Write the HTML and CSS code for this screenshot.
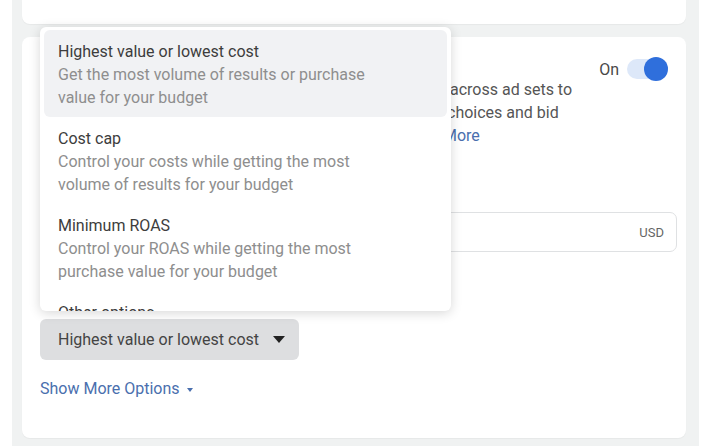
FILE: index.html
```html
<!DOCTYPE html>
<html lang="en">
<head>
    <meta charset="UTF-8">
    <meta name="viewport" content="width=device-width, initial-scale=1.0">
    <title>Bid Strategy</title>
    <link rel="stylesheet" href="styles.css">
</head>
<body>
    <div class="panel">
        <div class="card card-top"></div>

        <div class="card card-main">
            <div class="header-row">
                <span class="card-title">Campaign Budget Optimization</span>
                <span class="switch-label">On</span>
                <span class="switch"><span class="knob"></span></span>
            </div>

            <div class="desc">
                <div class="desc-line"><span class="lead">Distribute your campaign budget</span><span class="rest">across ad sets to</span></div>
                <div class="desc-line"><span class="lead">get more results based on your delivery</span><span class="rest shift-1">choices and bid</span></div>
                <div class="desc-line"><span class="lead">strategy in real time. Learn</span><span class="rest link shift-2">More</span></div>
            </div>

            <div class="field-label">Campaign Budget</div>
            <div class="input-box">
                <span class="input-value">$20.00</span>
                <span class="currency">USD</span>
            </div>

            <div class="field-label bid-label">Campaign Bid Strategy</div>
            <button class="select-btn">Highest value or lowest cost <span class="caret"></span></button>

            <div class="more-link">Show More Options <span class="caret-small"></span></div>

            <!-- open dropdown, drawn over the card -->
            <div class="menu">
                <div class="menu-item active">
                    <div class="item-title">Highest value or lowest cost</div>
                    <div class="item-desc">Get the most volume of results or purchase value for your budget</div>
                </div>
                <div class="menu-item">
                    <div class="item-title">Cost cap</div>
                    <div class="item-desc">Control your costs while getting the most volume of results for your budget</div>
                </div>
                <div class="menu-item">
                    <div class="item-title">Minimum ROAS</div>
                    <div class="item-desc">Control your ROAS while getting the most purchase value for your budget</div>
                </div>
                <div class="menu-item">
                    <div class="item-title">Other options</div>
                    <div class="item-desc">Bid cap and target cost</div>
                </div>
            </div>
        </div>
    </div>
</body>
</html>
```

FILE: styles.css
```css
body {
    margin: 0;
    background-color: #fff;
    font-family: Roboto, 'Liberation Sans', sans-serif;
    color: #444;
}
.panel {
    margin-left: 12px;
    width: 687px;
    height: 446px;
    background-color: #f0f2f2; /* page grey */
    padding: 0 13px 0 10px;
    box-sizing: border-box;
    overflow: hidden;
}
.card {
    background-color: #fff;
    border-radius: 8px;
    box-shadow: 0 1px 1px rgba(0, 0, 0, 0.04);
}
.card-top {
    height: 24px;
    border-radius: 0 0 8px 8px;
    margin-bottom: 13px;
}
.card-main {
    position: relative;
    height: 401px;
    padding: 0 9px 0 18px;
    box-sizing: border-box;
}
.header-row {
    display: flex;
    align-items: center;
    height: 22px;
    padding-top: 21px;
    margin-right: 9px;
}
.card-title {
    flex: 1;
    font-size: 16px;
    font-weight: 500;
    color: #333;
}
.switch-label {
    font-size: 16px;
    color: #484848;
    margin-right: 8px;
}
.switch {
    position: relative;
    width: 41px;
    height: 20px;
    border-radius: 10px;
    background-color: #dde8f9;
}
.knob {
    position: absolute;
    right: 0;
    top: -2px;
    width: 24px;
    height: 24px;
    border-radius: 50%;
    background-color: #2f6fdc;
}
.desc {
    margin-top: -2px;
    font-size: 16px;
    line-height: 23px;
    color: #555;
}
.desc-line {
    display: flex;
    white-space: nowrap;
}
.lead {
    width: 410px;
    overflow: hidden;
}
.shift-1 {
    margin-left: -3px;
}
.shift-2 {
    margin-left: -7px;
}
.link {
    color: #4a6fae;
}
.field-label {
    margin-top: 20px;
    font-size: 16px;
    line-height: 23px;
    font-weight: 500;
    color: #333;
}
.input-box {
    display: flex;
    align-items: center;
    justify-content: space-between;
    margin-top: 22px;
    height: 40px;
    border: 1px solid #dfe1e3;
    border-radius: 7px;
    padding: 0 12px;
    box-sizing: border-box;
}
.input-value {
    font-size: 16px;
    color: #333;
}
.currency {
    font-size: 13px;
    color: #666;
}
.bid-label {
    margin-top: 22px;
}
.select-btn {
    display: flex;
    align-items: center;
    margin-top: 22px;
    height: 41px;
    padding: 0 14px 0 18px;
    border: none;
    border-radius: 6px;
    background-color: #dddee0;
    font-family: Roboto, 'Liberation Sans', sans-serif;
    font-size: 16px;
    color: #444;
}
.caret {
    display: inline-block;
    margin-left: 14px;
    width: 0;
    height: 0;
    border-left: 6px solid transparent;
    border-right: 6px solid transparent;
    border-top: 7px solid #222;
}
.more-link {
    margin-top: 18px;
    font-size: 16px;
    line-height: 22px;
    color: #4a6fae;
}
.caret-small {
    display: inline-block;
    margin-left: 3px;
    vertical-align: middle;
    width: 0;
    height: 0;
    border-left: 3.5px solid transparent;
    border-right: 3.5px solid transparent;
    border-top: 4px solid #4a6fae;
}
.menu {
    position: absolute;
    left: 18px;
    top: -10px;
    width: 411px;
    height: 284px;
    padding: 3px 4px;
    box-sizing: border-box;
    background-color: #fff;
    border-radius: 6px;
    box-shadow: 0 2px 12px rgba(0, 0, 0, 0.16);
    overflow: hidden;
}
.menu-item {
    padding: 10px 14px 8px;
    border-radius: 6px;
    font-size: 16px;
    line-height: 23px;
}
.menu-item.active {
    background-color: #f1f2f4;
}
.item-title {
    color: #3d3d3d;
}
.item-desc {
    color: #8e8e8e;
    width: 322px;
}
```
